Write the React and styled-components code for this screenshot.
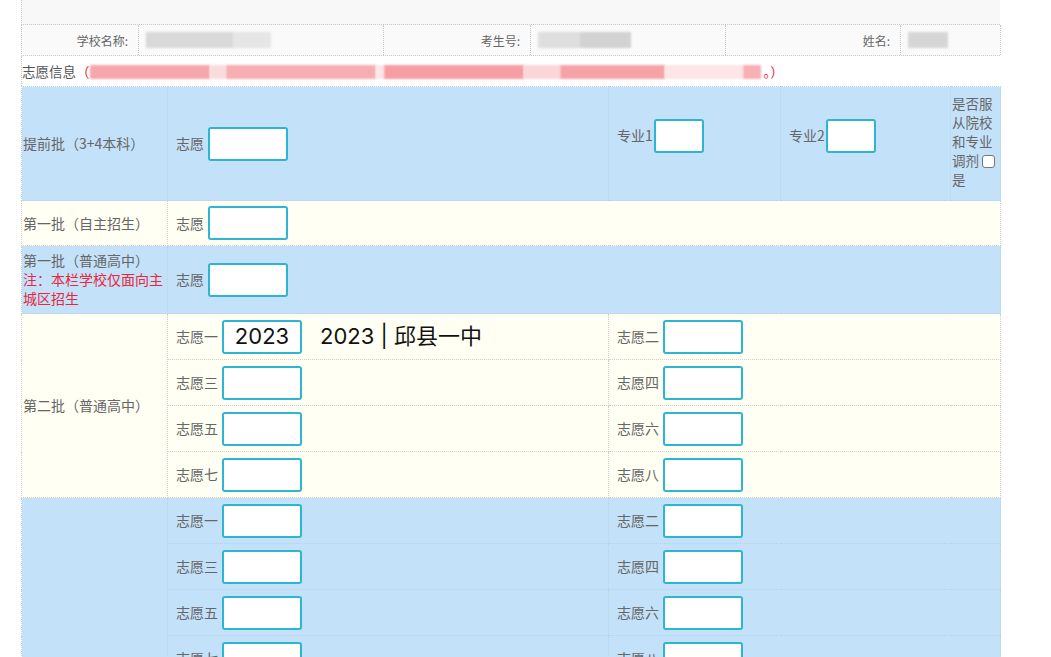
import React from 'react';
import styled, { createGlobalStyle } from 'styled-components';

const GlobalStyle = createGlobalStyle`
    body {
        margin: 0;
        background: #ffffff;
        font-family: "Noto Sans CJK SC", "Noto Sans", sans-serif;
        color: #666;
    }
`

const Page = styled.div`
    margin-left: 21px;
    width: 979px;
`

const TopBar = styled.div`
    height: 24px;
    background: #f8f8f8;
    border-bottom: 1px dotted #c8c8c8;
    border-left: 1px dotted #c8c8c8;
`

const HeaderRow = styled.div`
    display: grid;
    grid-template-columns: 117px 245px 147px 195px 175px 100px;
    height: 30px;
    background: #fafafa;
    border-bottom: 1px dotted #c8c8c8;
    border-left: 1px dotted #c8c8c8;
`

const HeaderCell = styled.div`
    display: flex;
    align-items: center;
    justify-content: ${p => p.label ? 'flex-end' : 'flex-start'};
    padding: ${p => p.label ? '0 10px 0 0' : '0 0 0 7px'};
    border-right: 1px dotted #c8c8c8;
    font-size: 12px;
    color: #666;
`

const Blur = styled.span`
    display: inline-block;
    height: 16px;
    filter: blur(1.2px);
    background: ${p => p.c || '#d4d4d4'};
`

const InfoRow = styled.div`
    display: flex;
    align-items: center;
    height: 30px;
    background: #ffffff;
    border-left: 1px dotted #c8c8c8;
    font-size: 13.5px;
    color: #555;
    white-space: nowrap;
`

const Red = styled.span`
    color: #e8273a;
`

const Pink = styled.span`
    display: inline-block;
    height: 14px;
    margin-top: 2px;
    filter: blur(1px);
    background: ${p => p.c};
`

const Table = styled.table`
    width: 979px;
    border-collapse: collapse;
    table-layout: fixed;
    font-size: 14px;
    color: #666;
`

const Row = styled.tr`
    background: ${p => p.tone === 'blue' ? '#c4e1fa' : '#fffff3'};
    height: ${p => p.h}px;
`

const Cell = styled.td`
    padding: ${p => p.first ? '0 0 0 1px' : '0 0 0 8px'};
    vertical-align: middle;
    border: 1px dotted ${p => p.tone === 'blue' ? '#b5d2ec' : '#cfcfcf'};
    line-height: 19px;
`

const Field = styled.div`
    display: flex;
    align-items: center;
    gap: ${p => p.gap ?? 4}px;
    margin-top: ${p => p.shift || 0}px;
`

const Box = styled.div`
    box-sizing: border-box;
    width: ${p => p.w || 80}px;
    height: 34px;
    border: 2px solid #2cb6d3;
    border-radius: 3px;
    background: #ffffff;
    display: flex;
    align-items: center;
    justify-content: center;
    font-family: Inter, Roboto, sans-serif;
    font-size: 22px;
    color: #111;
`

const Suggest = styled.span`
    margin-left: 14px;
    font-family: Inter, "Noto Sans CJK SC", sans-serif;
    font-size: 22px;
    color: #111;
`

const Note = styled.div`
    color: #e8273a;
`

const Adjust = styled.div`
    width: 44px;
    line-height: 19px;
    margin-top: -4px;
    font-size: 13.5px;
`

const Check = styled.input`
    appearance: none;
    width: 13px;
    height: 13px;
    margin: 0 0 -2px 3px;
    border: 1px solid #777;
    border-radius: 3px;
    background: #fff;
`

const pinkSegments = [
    { w: 120, c: '#f6a7ab' }, { w: 16, c: '#fbdcde' }, { w: 150, c: '#f7aeb2' },
    { w: 8, c: '#fde7e8' }, { w: 140, c: '#f59ea4' }, { w: 36, c: '#fbd6d8' },
    { w: 105, c: '#f6a3a8' }, { w: 78, c: '#fce6e7' }, { w: 18, c: '#f7b1b4' },
]

const wishes = [['一', '二'], ['三', '四'], ['五', '六'], ['七', '八']]

const Field2 = ({ name, children }) => (
    <Field>
        <span>志愿{name}</span>
        {children || <Box />}
    </Field>
)

const App = () => {
    return (
        <Page>
            <GlobalStyle />
            <TopBar />
            <HeaderRow>
                <HeaderCell label>学校名称:</HeaderCell>
                <HeaderCell><Blur style={{ width: 125 }} c="linear-gradient(90deg,#d9d9d9 0 70%,#e6e6e6 70%)" /></HeaderCell>
                <HeaderCell label>考生号:</HeaderCell>
                <HeaderCell><Blur style={{ width: 93 }} c="linear-gradient(90deg,#dedede 0 45%,#d2d2d2 45%)" /></HeaderCell>
                <HeaderCell label>姓名:</HeaderCell>
                <HeaderCell><Blur style={{ width: 40 }} c="#d6d6d6" /></HeaderCell>
            </HeaderRow>
            <InfoRow>
                志愿信息<Red>（</Red>
                {pinkSegments.map((s, i) => <Pink key={i} c={s.c} style={{ width: s.w }} />)}
                <Red>&nbsp;。）</Red>
            </InfoRow>
            <Table>
                <colgroup>
                    <col style={{ width: 146 }} />
                    <col style={{ width: 441 }} />
                    <col style={{ width: 172 }} />
                    <col style={{ width: 170 }} />
                    <col style={{ width: 50 }} />
                </colgroup>
                <tbody>
                    <Row tone="blue" h={114}>
                        <Cell first tone="blue">提前批（3+4本科）</Cell>
                        <Cell tone="blue"><Field>志愿<Box /></Field></Cell>
                        <Cell tone="blue"><Field shift={-16} gap={1}>专业1<Box w={50} /></Field></Cell>
                        <Cell tone="blue"><Field shift={-16} gap={1}>专业2<Box w={50} /></Field></Cell>
                        <Cell tone="blue" style={{ padding: '0 0 0 1px' }}>
                            <Adjust>是否服从院校和专业调剂<Check type="checkbox" />是</Adjust>
                        </Cell>
                    </Row>
                    <Row h={45}>
                        <Cell first>第一批（自主招生）</Cell>
                        <Cell colSpan={4}><Field>志愿<Box /></Field></Cell>
                    </Row>
                    <Row tone="blue" h={68}>
                        <Cell first tone="blue">
                            第一批（普通高中）
                            <Note>注：本栏学校仅面向主城区招生</Note>
                        </Cell>
                        <Cell tone="blue" colSpan={4}><Field>志愿<Box /></Field></Cell>
                    </Row>
                    {wishes.map(([a, b], i) => (
                        <Row key={'s' + i} h={46}>
                            {i === 0 && <Cell first rowSpan={4}>第二批（普通高中）</Cell>}
                            <Cell>
                                {i === 0
                                    ? <Field2 name={a}><Box>2023</Box><Suggest>2023 | 邱县一中</Suggest></Field2>
                                    : <Field2 name={a} />}
                            </Cell>
                            <Cell colSpan={3}><Field2 name={b} /></Cell>
                        </Row>
                    ))}
                    {wishes.map(([a, b], i) => (
                        <Row key={'t' + i} tone="blue" h={46}>
                            {i === 0 && <Cell first tone="blue" rowSpan={4}></Cell>}
                            <Cell tone="blue"><Field2 name={a} /></Cell>
                            <Cell tone="blue" colSpan={3}><Field2 name={b} /></Cell>
                        </Row>
                    ))}
                </tbody>
            </Table>
        </Page>
    );
};

export default App
